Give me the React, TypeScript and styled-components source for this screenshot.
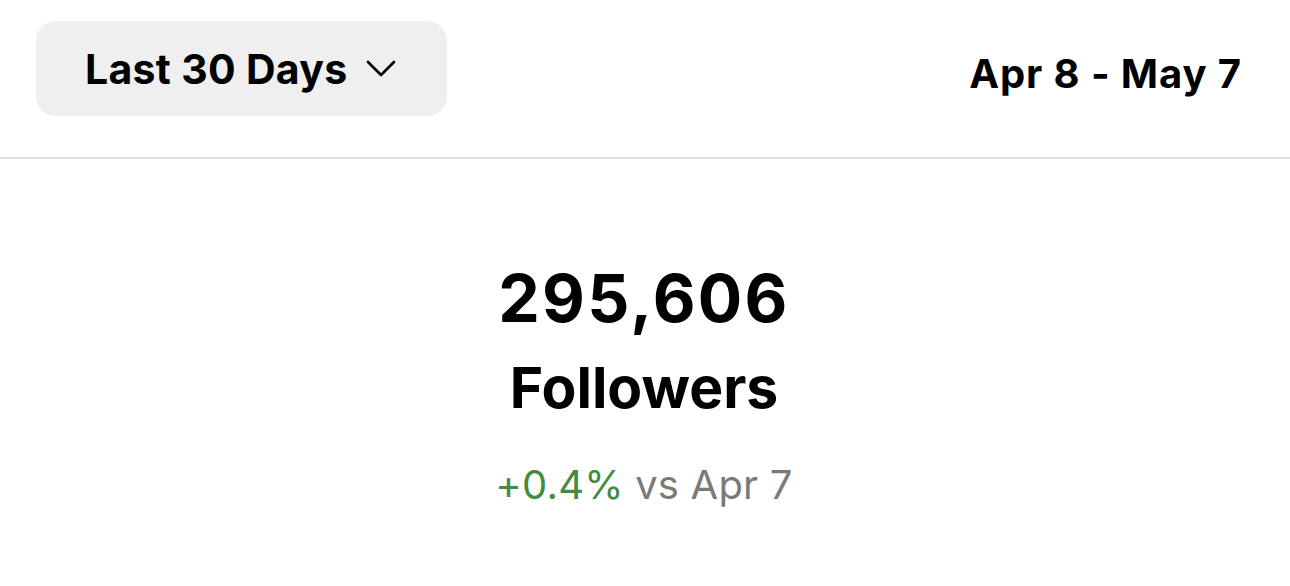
import React from "react";
import styled, { createGlobalStyle } from "styled-components";

const Global = createGlobalStyle`
  html, body { margin: 0; padding: 0; background: #ffffff; }
  body { font-family: Inter, "Liberation Sans", sans-serif; color: #000; }
`;

const Page = styled.div`
  width: 1290px;
  height: 586px;
  display: flex;
  flex-direction: column;
  overflow: hidden;
`;

const Header = styled.header`
  display: flex;
  align-items: center;
  justify-content: space-between;
  height: 159px;
  padding: 4px 48px 24px 36px;
  box-sizing: border-box;
  border-bottom: 2px solid #e2e2e2;
`;

const RangeButton = styled.button`
  display: flex;
  align-items: center;
  gap: 19px;
  width: 411px;
  height: 95px;
  border: none;
  border-radius: 20px;
  background: #efefef;
  padding: 0 0 0 49px;
  box-sizing: border-box;
  font-family: inherit;
  font-size: 41px;
  font-weight: 700;
  color: #000;
  letter-spacing: 0.3px;
  cursor: pointer;
`;

const DateRange = styled.div`
  font-size: 40px;
  font-weight: 700;
  letter-spacing: 0.9px;
  margin-top: 10px;
`;

const Stats = styled.section`
  display: flex;
  flex-direction: column;
  align-items: center;
  padding-top: 106px;
  padding-right: 2px;
`;

const Count = styled.div`
  font-size: 66px;
  font-weight: 700;
  line-height: 1;
  letter-spacing: 2.3px;
`;

const Label = styled.div`
  font-size: 57px;
  font-weight: 700;
  line-height: 1;
  margin-top: 28px;
`;

const Change = styled.div`
  font-size: 40px;
  font-weight: 400;
  line-height: 1;
  margin-top: 49px;
  color: #7a7a7a;
  letter-spacing: 0.2px;
`;

const Up = styled.span`
  color: #3f8c42;
`;

const Chevron = () => (
  <svg width="30" height="18" viewBox="0 0 30 18" fill="none">
    <path d="M2 2 L15 15 L28 2" stroke="#000" strokeWidth="2.6" strokeLinecap="round" strokeLinejoin="round" />
  </svg>
);

export default function App() {
  return (
    <Page>
      <Global />
      <Header>
        <RangeButton>
          Last 30 Days
          <Chevron />
        </RangeButton>
        <DateRange>Apr 8 - May 7</DateRange>
      </Header>
      <Stats>
        <Count>295,606</Count>
        <Label>Followers</Label>
        <Change>
          <Up>+0.4%</Up> vs Apr 7
        </Change>
      </Stats>
    </Page>
  );
}
